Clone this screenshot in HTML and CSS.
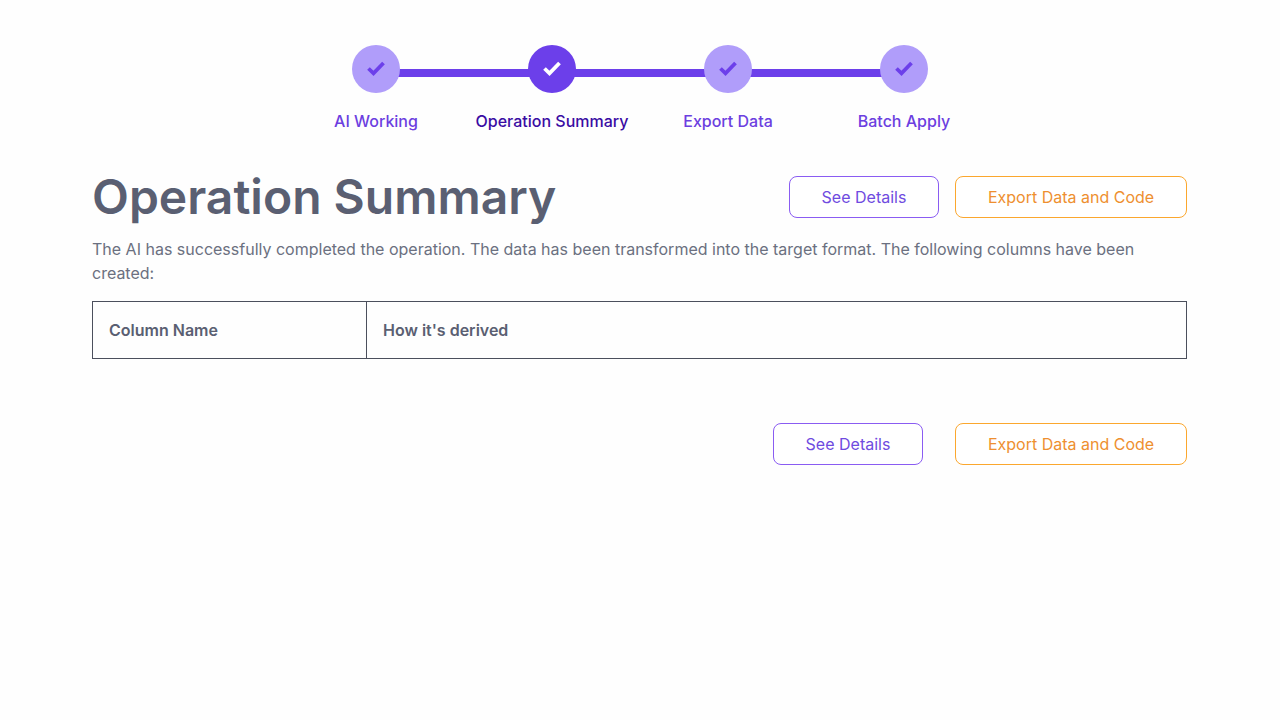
FILE: index.html
```html
<!DOCTYPE html>
<html lang="en">
<head>
  <meta charset="UTF-8" />
  <title>Operation Summary</title>
  <link rel="stylesheet" href="styles.css">
</head>
<body>
  <!-- Stepper -->
  <div class="stepper">
    <div class="step">
      <div class="step-circle">
        <svg width="20" height="16" viewBox="0 0 20 16"><path d="M2.5 7.5l5 4.8L17.5 2" /></svg>
      </div>
      <div class="step-label">AI Working</div>
    </div>
    <div class="step current">
      <div class="step-circle">
        <svg width="20" height="16" viewBox="0 0 20 16"><path d="M2.5 7.5l5 4.8L17.5 2" /></svg>
      </div>
      <div class="step-label">Operation Summary</div>
    </div>
    <div class="step">
      <div class="step-circle">
        <svg width="20" height="16" viewBox="0 0 20 16"><path d="M2.5 7.5l5 4.8L17.5 2" /></svg>
      </div>
      <div class="step-label">Export Data</div>
    </div>
    <div class="step last">
      <div class="step-circle">
        <svg width="20" height="16" viewBox="0 0 20 16"><path d="M2.5 7.5l5 4.8L17.5 2" /></svg>
      </div>
      <div class="step-label">Batch Apply</div>
    </div>
  </div>

  <div class="container">
    <div class="title-row">
      <h1>Operation Summary</h1>
      <div class="actions">
        <button class="btn btn-purple">See Details</button>
        <button class="btn btn-orange">Export Data and Code</button>
      </div>
    </div>

    <p class="intro">The AI has successfully completed the operation. The data has been transformed into the target format. The following columns have been created:</p>

    <table class="columns">
      <tr>
        <th class="col-name">Column Name</th>
        <th>How it's derived</th>
      </tr>
    </table>

    <div class="actions bottom">
      <button class="btn btn-purple">See Details</button>
      <button class="btn btn-orange">Export Data and Code</button>
    </div>
  </div>
</body>
</html>
```

FILE: styles.css
```css
body {
  margin: 0;
  background: #fefefe;
  color: #5a5f72;
  font-family: Inter, "Noto Sans", sans-serif;
}

.stepper {
  display: flex;
  justify-content: center;
  padding-top: 45px;
}

.step {
  width: 176px;
  display: flex;
  flex-direction: column;
  align-items: center;
  position: relative;
}

/* connector between circles */
.step::after {
  content: "";
  position: absolute;
  top: 24px;
  left: 88px;
  width: 176px;
  height: 8px;
  background: #6c3fea;
}

.step.last::after {
  display: none;
}

.step-circle {
  width: 48px;
  height: 48px;
  border-radius: 50%;
  background: #b09dfa;
  display: flex;
  justify-content: center;
  align-items: center;
  position: relative;
  z-index: 1;
}

.step-circle svg {
  fill: none;
  stroke: #6c3fea;
  stroke-width: 3.8;
}

.step.current .step-circle {
  background: #6c3fea;
}

.step.current .step-circle svg {
  stroke: #fff;
}

.step-label {
  margin-top: 18px;
  font-size: 16px;
  line-height: 20px;
  font-weight: 500;
  color: #6c3fe0;
  white-space: nowrap;
}

.step.current .step-label {
  color: #3a0ca3;
}

.container {
  padding: 0 93px 0 92px;
}

.title-row {
  display: flex;
  justify-content: space-between;
  align-items: center;
  margin-top: 30px;
}

h1 {
  margin: 0;
  font-size: 48px;
  line-height: 72px;
  font-weight: 600;
  color: #5a5f72;
}

.actions {
  display: flex;
  gap: 16px;
}

.btn {
  height: 42px;
  background: #fff;
  border-radius: 8px;
  font-family: inherit;
  font-size: 16px;
  font-weight: 400;
  padding: 0;
}

.btn-purple {
  width: 150px;
  border: 1px solid #8a5cf2;
  color: #6f4be0;
}

.btn-orange {
  width: 232px;
  border: 1px solid #fba72e;
  color: #ee8f30;
}

.intro {
  margin: 4px 0 0;
  font-size: 16px;
  line-height: 24px;
  color: #6b7080;
}

.columns {
  width: 100%;
  margin-top: 16px;
  border-collapse: collapse;
}

.columns th {
  height: 56px;
  padding: 0 16px;
  border: 1px solid #4b4f5c;
  text-align: left;
  font-size: 16px;
  font-weight: 600;
  color: #5a5f72;
}

.columns .col-name {
  width: 241px;
}

.actions.bottom {
  justify-content: flex-end;
  gap: 32px;
  margin-top: 64px;
}
```
